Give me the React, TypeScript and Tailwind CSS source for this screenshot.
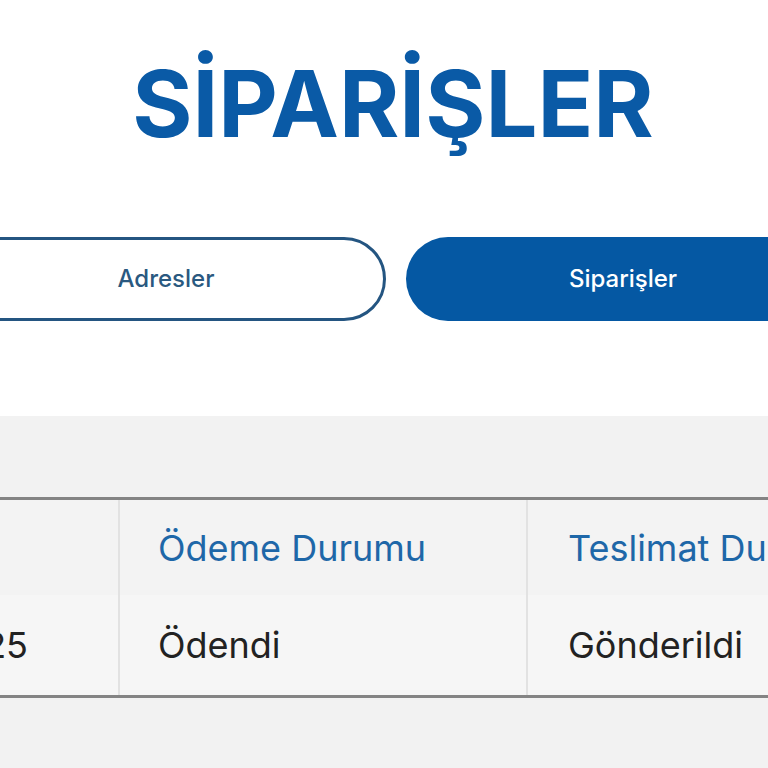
export default function App() {
  return (
    <div
      className="w-[768px] h-[768px] overflow-hidden bg-white"
      style={{ fontFamily: "Inter, 'Noto Sans', sans-serif" }}
    >
      <div className="h-[416px] flex flex-col">
        <h1 className="pt-[49px] pl-[18px] text-center text-[92px] leading-[110px] font-bold text-[#0a5aa6]">
          SİPARİŞLER
        </h1>
        <div className="mt-[78px] ml-[-54px] w-[894px] flex gap-[20px]">
          <button className="flex-1 h-[84px] rounded-full border-[3px] border-[#245581] bg-white text-[24px] font-medium text-[#2a5980]">
            Adresler
          </button>
          <button className="flex-1 h-[84px] rounded-full bg-[#0558a3] text-[24px] font-medium text-white">
            Siparişler
          </button>
        </div>
      </div>
      <div className="bg-[#f2f2f2] h-[352px] pt-[81px]">
        <div className="border-y-[3px] border-[#848484] bg-[#f3f3f3]">
          <div className="grid grid-cols-[120px_408px_1fr]">
            <div className="h-[95px] border-r-2 border-[#e2e2e2]"></div>
            <div className="h-[95px] border-r-2 border-[#e2e2e2] pl-[38px] flex items-center text-[36px] text-[#1e67a8]">
              Ödeme Durumu
            </div>
            <div className="h-[95px] pl-[40px] flex items-center whitespace-nowrap text-[36px] text-[#1e67a8]">
              Teslimat Durumu
            </div>
            <div className="h-[100px] border-r-2 border-[#e2e2e2] bg-[#f6f6f6] flex items-center justify-end pr-[90px] text-[36px] text-[#222]">
              25
            </div>
            <div className="h-[100px] border-r-2 border-[#e2e2e2] bg-[#f6f6f6] pl-[38px] flex items-center text-[36px] text-[#222]">
              Ödendi
            </div>
            <div className="h-[100px] bg-[#f6f6f6] pl-[40px] flex items-center text-[36px] text-[#222]">
              Gönderildi
            </div>
          </div>
        </div>
      </div>
    </div>
  );
}
